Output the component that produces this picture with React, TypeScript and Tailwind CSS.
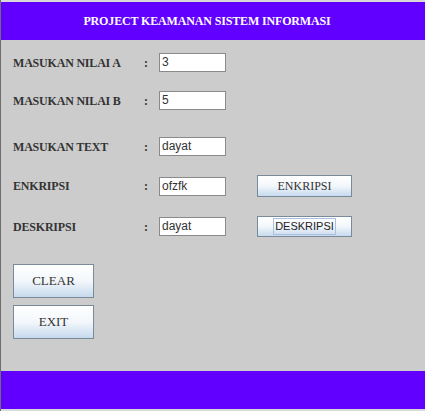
import React from 'react';

const labelCls = "w-[142px] pl-[12px] text-[12px] font-bold text-[#333] tracking-[-0.2px]";
const inputCls = "w-[67px] h-[19px] bg-white border border-[#8a8a8a] px-[2px] text-[12px] leading-[17px] text-[#333]";
const btnCls = "bg-gradient-to-b from-white via-[#f3f7fb] to-[#c6daee] border border-[#7b8a99] text-[#333] flex items-center justify-center";
const serif = { fontFamily: '"Liberation Serif", "Times New Roman", serif' };

const Row = ({ label, value, h, mt, children }: { label: string; value: string; h: string; mt: string; children?: React.ReactNode }) => (
    <div className={`flex items-center ${h} ${mt}`}>
        <span className={labelCls}>{label}</span>
        <span className="w-[16px] pl-[1px] text-[12px] font-bold text-[#333]">:</span>
        <div className={inputCls} style={{ fontFamily: '"Liberation Sans", Arial, sans-serif' }}>{value}</div>
        {children}
    </div>
);

const App = () => {
    return (
        <div
            className="w-[425px] h-[411px] bg-[#cccccc] border-l border-l-[#6e6e6e] flex flex-col"
            style={serif}
        >
            <div className="h-[2px] bg-[#d8d8d8]" />
            <header className="h-[38px] bg-[#6100ff] flex items-center justify-center pr-[12px]">
                <span className="text-white font-bold text-[12px] tracking-[-0.15px]">PROJECT KEAMANAN SISTEM INFORMASI</span>
            </header>

            <Row label="MASUKAN NILAI A" value="3" h="h-[19px]" mt="mt-[13px]" />
            <Row label="MASUKAN NILAI B" value="5" h="h-[19px]" mt="mt-[19px]" />
            <Row label="MASUKAN TEXT" value="dayat" h="h-[19px]" mt="mt-[27px]" />
            <Row label="ENKRIPSI" value="ofzfk" h="h-[22px]" mt="mt-[19px]">
                <button className={`${btnCls} ml-[31px] w-[95px] h-[22px] text-[12px]`} style={serif}>ENKRIPSI</button>
            </Row>
            <Row label="DESKRIPSI" value="dayat" h="h-[21px]" mt="mt-[19px]">
                <button className={`${btnCls} ml-[31px] w-[95px] h-[21px]`}>
                    <span
                        className="border border-[#a9c1dc] px-[1px] text-[11px] leading-[15px] text-[#222]"
                        style={{ fontFamily: '"Liberation Sans", Arial, sans-serif' }}
                    >DESKRIPSI</span>
                </button>
            </Row>

            <div className="pl-[12px] mt-[27px] flex flex-col gap-[7px]">
                <button className={`${btnCls} w-[81px] h-[34px] text-[13px]`} style={serif}>CLEAR</button>
                <button className={`${btnCls} w-[81px] h-[34px] text-[13px]`} style={serif}>EXIT</button>
            </div>

            <div className="flex-1" />
            <footer className="h-[38px] bg-[#6100ff]" />
            <div className="h-[2px] bg-[#d8d8d8]" />
        </div>
    );
};

export default App;
